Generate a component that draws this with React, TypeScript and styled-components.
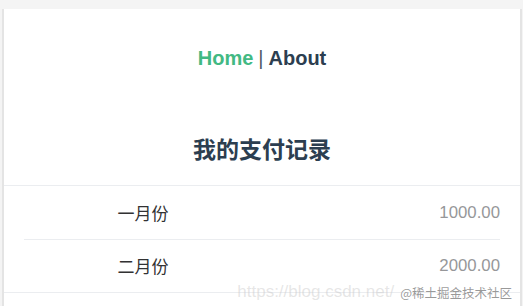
import React from "react";
import styled, { createGlobalStyle } from "styled-components";

const Global = createGlobalStyle`
  html, body {
    margin: 0;
    padding: 0;
    background: #f4f4f4;
  }
  body {
    font-family: "Liberation Sans", Arial, "Noto Sans CJK SC", sans-serif;
  }
`;

const Frame = styled.div`
  padding: 9px 1px 0 2px;
  height: 306px;
  box-sizing: border-box;
  background: #f4f4f4;
`;

const Card = styled.div`
  position: relative;
  background: #fff;
  border-left: 2px solid #e4e4e4;
  border-right: 2px solid #e4e4e4;
  height: 100%;
  overflow: hidden;
`;

const Nav = styled.nav`
  padding: 37.5px 0;
  text-align: center;
  font-size: 20px;
  line-height: 23px;
  font-weight: bold;
  color: #2c3e50;
`;

const NavLink = styled.a<{ $active?: boolean }>`
  color: ${(p) => (p.$active ? "#42b983" : "#2c3e50")};
  text-decoration: none;
  font-weight: bold;
`;

const Sep = styled.span`
  font-weight: normal;
  color: #4f5b66;
  margin: 0 5px 0 5px;
`;

const Title = styled.h2`
  margin: 25.5px 0 22.5px;
  text-align: center;
  font-family: "Noto Sans CJK SC", sans-serif;
  font-size: 23px;
  line-height: 30px;
  font-weight: bold;
  color: #2c3e50;
`;

const Group = styled.div`
  border-top: 1px solid #ebedf0;
  border-bottom: 1px solid #ebedf0;
`;

const Cell = styled.div<{ $last?: boolean }>`
  position: relative;
  display: flex;
  align-items: center;
  padding: 12px 20px;
  line-height: 29px;
  &::after {
    content: "";
    display: ${(p) => (p.$last ? "none" : "block")};
    position: absolute;
    left: 20px;
    right: 20px;
    bottom: -1px;
    border-bottom: 1px solid #ebedf0;
  }
`;

const Label = styled.div`
  flex: 1;
  text-align: center;
  font-family: "Noto Sans CJK SC", sans-serif;
  font-size: 17px;
  color: #323233;
`;

const Value = styled.div`
  flex: 1;
  text-align: right;
  font-family: "Liberation Sans", Arial, sans-serif;
  font-size: 16.8px;
  color: #969799;
`;

const Watermark = styled.div`
  position: absolute;
  right: 8px;
  bottom: 4px;
  display: flex;
  align-items: center;
  gap: 6px;
  pointer-events: none;
`;

const WaterUrl = styled.span`
  font-family: "Liberation Sans", Arial, sans-serif;
  font-size: 17px;
  color: rgba(200, 200, 200, 0.45);
`;

const WaterSite = styled.span`
  font-family: "Noto Sans CJK SC", sans-serif;
  font-size: 12.5px;
  color: rgba(120, 120, 120, 0.75);
  text-shadow: 0 0 1px #fff;
`;

const rows = [
  { label: "一月份", value: "1000.00" },
  { label: "二月份", value: "2000.00" },
];

export default function App() {
  return (
    <>
      <Global />
      <Frame>
        <Card>
          <Nav>
            <NavLink $active>Home</NavLink>
            <Sep>|</Sep>
            <NavLink>About</NavLink>
          </Nav>
          <Title>我的支付记录</Title>
          <Group>
            {rows.map((r, i) => (
              <Cell key={r.label} $last={i === rows.length - 1}>
                <Label>{r.label}</Label>
                <Value>{r.value}</Value>
              </Cell>
            ))}
          </Group>
          <Watermark>
            <WaterUrl>https://blog.csdn.net/</WaterUrl>
            <WaterSite>@稀土掘金技术社区</WaterSite>
          </Watermark>
        </Card>
      </Frame>
    </>
  );
}
